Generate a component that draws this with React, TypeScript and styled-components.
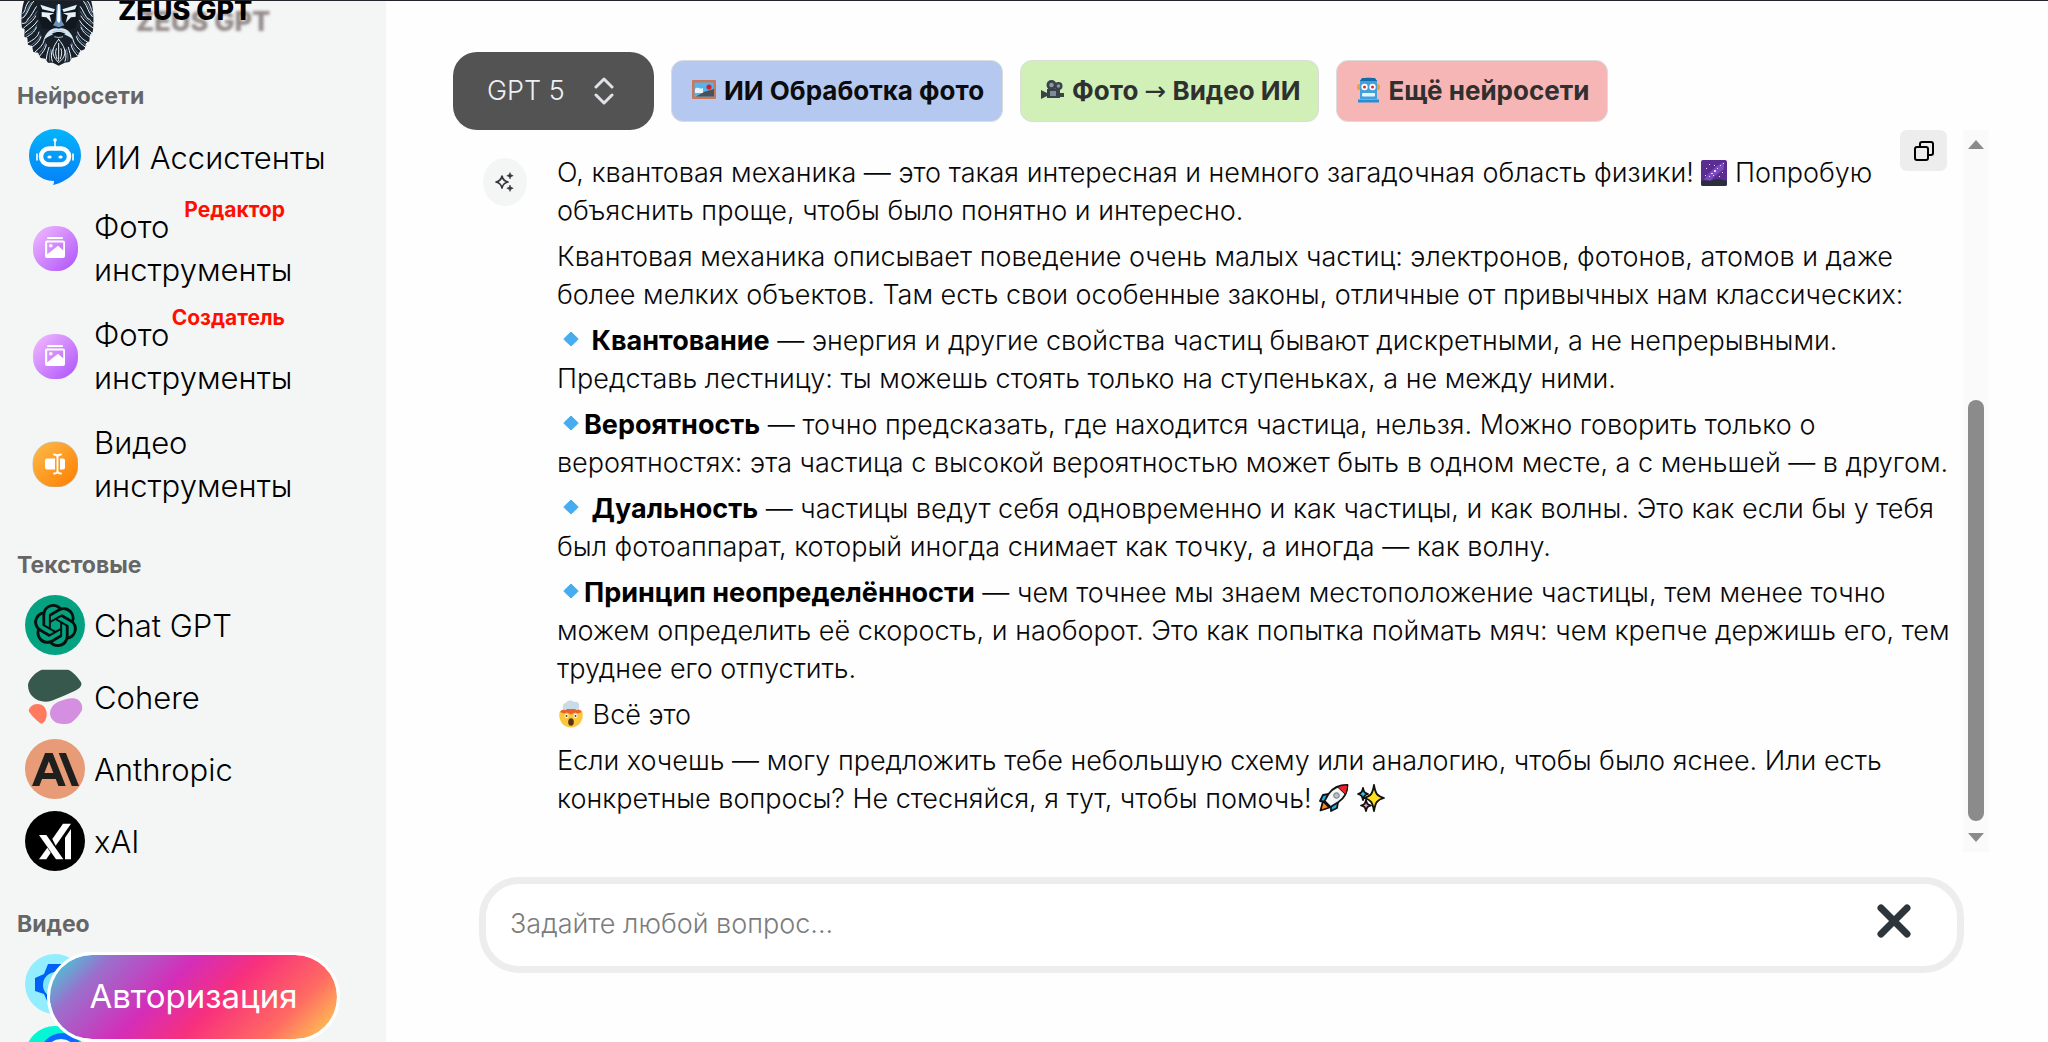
import React from "react";
import styled, { createGlobalStyle, css } from "styled-components";
import { SiOpenai, SiAnthropic } from "react-icons/si";

const GlobalStyle = createGlobalStyle`
  *, *::before, *::after { box-sizing: border-box; }
  body {
    margin: 0;
    background: #fefefe;
    color: #080808;
    font-family: Inter, "Open Sans", "Noto Sans", sans-serif;
    font-weight: 300;
  }
  button, input, select { font: inherit; color: inherit; }
`;

/* ---------- layout ---------- */

const Page = styled.div`
  display: flex;
  height: 100vh;
  overflow: hidden;
  border-top: 1px solid #22262c;
`;

const Sidebar = styled.aside`
  position: relative;
  flex: 0 0 386px;
  overflow: hidden;
  background: #f4f6f6;
`;

const Main = styled.main`
  flex: 1;
  min-width: 0;
  display: flex;
  flex-direction: column;
  padding: 51px 59px 69px 67px;
`;

/* ---------- sidebar ---------- */

const Brand = styled.a`
  display: flex;
  align-items: flex-start;
  gap: 17px;
  padding-left: 17px;
  color: #000;
  text-decoration: none;
`;

const BrandName = styled.span`
  font-size: 27px;
  line-height: 20px;
  font-weight: 800;
  text-shadow: 18px 11px 3px rgba(70, 50, 50, 0.55);
`;

const SectionTitle = styled.h2<{ $first?: boolean }>`
  margin: ${(p) => (p.$first ? 16 : 33)}px 0 10px 17px;
  font-size: 23px;
  line-height: 28px;
  font-weight: 700;
  color: #666;
`;

const NavList = styled.ul`
  margin: 0;
  padding: 0;
  list-style: none;
`;

const NavLink = styled.a<{ $height: number }>`
  position: relative;
  display: flex;
  align-items: center;
  gap: 9px;
  width: 308px;
  min-height: ${(p) => p.$height}px;
  padding-left: 25px;
  color: #000;
  font-size: 31px;
  line-height: 43px;
  text-decoration: none;
  white-space: nowrap;
`;

const IconCell = styled.span`
  flex: 0 0 60px;
  display: flex;
  align-items: center;
  justify-content: center;
`;

const Disc = styled.span<{ $bg: string; $fg: string }>`
  display: flex;
  align-items: center;
  justify-content: center;
  width: 60px;
  height: 60px;
  border-radius: 50%;
  background: ${(p) => p.$bg};
  color: ${(p) => p.$fg};
`;

const Tag = styled.span`
  position: absolute;
  top: 3px;
  right: 23px;
  font-size: 21px;
  line-height: 26px;
  font-weight: 700;
  color: #ff0f00;
`;

const AuthButton = styled.button`
  position: absolute;
  left: 47px;
  bottom: 0;
  width: 293px;
  height: 90px;
  padding: 0 0 2px;
  border: 3px solid #fff;
  border-radius: 45px;
  background: linear-gradient(135deg, #30e0d8 0%, #9b6fcc 17%, #d42db9 40%, #f8307c 58%, #ff6a62 80%, #ffd750 100%) padding-box;
  color: #fff;
  font-size: 33px;
  font-weight: 400;
  cursor: pointer;
`;

/* ---------- toolbar ---------- */

const Toolbar = styled.div`
  display: flex;
  align-items: center;
  gap: 17px;
`;

const ModelPicker = styled.label`
  position: relative;
  display: flex;
  align-items: center;
  color: #eef1f3;
`;

const ModelSelect = styled.select`
  appearance: none;
  width: 201px;
  height: 78px;
  padding: 0 64px 2px 34px;
  border: 0;
  border-radius: 24px;
  background: #535353;
  font-size: 27px;
`;

const PickerArrows = styled.svg`
  position: absolute;
  right: 40px;
  pointer-events: none;
`;

const ActionButton = styled.button<{ $bg: string; $color: string }>`
  display: flex;
  align-items: center;
  gap: 8px;
  height: 62px;
  padding: 0 18px 2px 20px;
  border: 1px solid #dcdcdc;
  border-radius: 12px;
  background: ${(p) => p.$bg};
  color: ${(p) => p.$color};
  font-size: 26px;
  font-weight: 700;
  white-space: nowrap;
  cursor: pointer;
`;

const Arrow = styled.span`
  font-family: "DejaVu Sans", sans-serif;
  font-weight: 400;
`;

/* ---------- conversation ---------- */

const Conversation = styled.section`
  flex: 1;
  min-height: 0;
  display: flex;
`;

const Messages = styled.div`
  position: relative;
  flex: 1;
  min-width: 0;
  overflow: hidden;
`;

const Message = styled.article`
  display: flex;
  align-items: flex-start;
  gap: 30px;
  padding: 24px 0 0 30px;
`;

const Avatar = styled.span`
  flex: 0 0 44px;
  display: flex;
  align-items: center;
  justify-content: center;
  height: 48px;
  margin-top: 4px;
  border-radius: 50%;
  background: #f4f6f6;
`;

const Answer = styled.div`
  flex: 1;
  font-size: 27px;
  line-height: 38px;
  white-space: nowrap;

  p { margin: 0 0 8px; }
  strong { font-weight: 700; color: #000; }
`;

const inlineGlyph = css`
  display: inline-block;
  vertical-align: -4px;
`;

const Glyph = styled.svg`
  ${inlineGlyph}
  flex: none;
`;

const CopyButton = styled.button`
  position: absolute;
  top: 0;
  right: 16px;
  display: flex;
  align-items: center;
  justify-content: center;
  width: 47px;
  height: 41px;
  padding: 0;
  border: 0;
  border-radius: 7px;
  background: #ededed;
  cursor: pointer;
`;

const ScrollTrack = styled.div`
  flex: 0 0 26px;
  display: flex;
  flex-direction: column;
  align-items: center;
  padding: 10px 0;
  background: #fafafa;
`;

const ScrollThumb = styled.div`
  width: 16px;
  height: 60%;
  margin: auto 0 12px;
  border-radius: 8px;
  background: #8b8b8b;
`;

const Composer = styled.form`
  display: flex;
  align-items: center;
  height: 96px;
  margin: 25px 25px 0 26px;
  padding: 0 46px 4px 24px;
  border: 7px solid #ededed;
  border-radius: 40px;
  background: #fff;
`;

const Prompt = styled.input`
  flex: 1;
  min-width: 0;
  padding: 0;
  border: 0;
  outline: 0;
  background: none;
  font-size: 27px;

  &::placeholder { color: #7c7c7c; opacity: 1; }
`;

const ClearButton = styled.button`
  display: flex;
  padding: 0 0 4px;
  border: 0;
  background: none;
  cursor: pointer;
`;

/* ---------- drawings ---------- */

const ZeusLogo = () => (
  <svg width="84" height="65" viewBox="0 3 252 195" fill="none" aria-hidden="true">
    <path d="M22 0C12 30 12 64 15 84l8 4-1 22 9 4 2 20 12 4 4 18 14 2 8 16 14 2 8 12 14 0 18 9 18-9 14-2 8-12 16-4 8-16 14-6 4-18 10-6 2-20 8-8c4-24 4-70-6-98Z" fill="#18202a" />
    <g stroke="#eaf3fa" strokeWidth="3" strokeLinecap="round">
      <path d="M2 50c6 6 12 6 18 2M16 70c8 2 12-4 18-14M250 48c-6 8-12 8-18 4M234 70c-8 2-10-4-18-14" />
      <path d="M36 4c-14 16-8 26-18 36M50 4C34 22 36 34 22 50M58 20C48 34 46 46 32 58M56 48C50 62 38 68 20 84M62 62C52 78 38 86 24 98M58 82C52 98 40 104 28 112M66 96c-4 18-20 24-32 32M72 110c-4 16-18 24-28 32M82 120c-4 16-16 26-28 36M88 134c-2 14-12 24-20 34M96 142c-4 14-8 26-8 36M106 150c-4 12-4 24 0 34" />
      <path d="M212 4c12 16 8 26 18 36M200 4c14 18 12 32 26 46M190 20c10 14 12 26 24 38M192 48c8 14 16 20 36 36M188 62c8 16 22 24 36 36M192 82c6 16 16 22 28 30M182 96c6 18 20 24 32 32M178 110c4 16 18 24 28 32M168 120c4 16 16 26 28 36M162 134c2 14 12 24 20 34M154 142c4 14 8 26 8 36M144 150c4 12 4 24 0 34" />
      <path d="M125 118c-16 20-24 38-10 58l10 12 12-12c14-20 4-38-12-58ZM125 130v52M118 146c-4 12-2 20 2 30M132 146c4 12 2 20-2 30" />
    </g>
    <g stroke="#79a9d6" strokeWidth="2">
      <path d="M44 6C28 24 32 36 18 52M60 34C50 52 42 58 24 72M60 74C52 92 42 96 26 106M70 104c-6 18-18 24-30 34M86 128c-4 16-14 26-24 36M102 146c-4 14-6 26-4 38M206 6c14 18 12 30 24 44M190 34c10 18 18 24 34 38M190 74c8 18 18 22 34 32M180 104c6 18 18 24 30 34M164 128c4 16 14 26 24 36M148 146c4 14 6 26 4 38" />
    </g>
    <path d="M68 14 116 30l2 40-16 20-26-6-10-30ZM182 14l-48 16-2 40 16 20 26-6 10-30Z" fill="#10171e" />
    <path d="m70 14 44 14-4 8-34-8ZM180 14l-44 14 4 8 34-8ZM74 36l38 4-14 6 6 22-16-16-14-2ZM176 36l-38 4 14 6-6 22 16-16 14-2Z" fill="#e6f1fa" />
    <path d="M119 14h12l3 48 8 14-17 6-17-6 8-14Z" fill="#6a94ba" />
    <path d="M123 12h5l2 50-4 8-6-8Z" fill="#fff" />
    <path d="M125 86c-22-6-38 10-46 36 16-16 28-20 46-18 18-2 30 2 46 18-8-26-24-42-46-36Z" fill="#d3e4f2" />
    <path d="M104 102c14-8 28-8 42 0-12 6-30 6-42 0Z" fill="#0d141a" />
    <path d="M108 95c10-4 24-4 34 0M112 110c8 3 18 3 26 0" stroke="#a9c6de" strokeWidth="3" />
  </svg>
);

const AssistantIcon = () => (
  <svg width="54" height="58" viewBox="0 0 54 58" aria-hidden="true">
    <defs>
      <linearGradient id="assistant" x1="0" y1="0" x2="0" y2="1">
        <stop offset="0" stopColor="#03b4fb" />
        <stop offset="1" stopColor="#0680f8" />
      </linearGradient>
    </defs>
    <path d="M27 1a26 26 0 0 1 26 26c0 14-11 26-28 30 1-2 1-3 1-4C11 53 1 41 1 27A26 26 0 0 1 27 1Z" fill="url(#assistant)" />
    <path d="M27 12v7" stroke="#fff" strokeWidth="1.5" />
    <circle cx="27" cy="12" r="1.8" fill="#fff" />
    <path d="M9 26v6M45 26v6" stroke="#fff" strokeWidth="1.6" strokeLinecap="round" />
    <rect x="13" y="20.5" width="28" height="16" rx="8" fill="none" stroke="#fff" strokeWidth="4.5" />
    <ellipse cx="21.500" cy="29" rx="2.200" ry="1.500" fill="#fff" />
    <ellipse cx="32.500" cy="29" rx="2.200" ry="1.500" fill="#fff" />
  </svg>
);

const PhotoIcon = ({ id }: { id: string }) => (
  <svg width="46" height="46" viewBox="0 0 46 46" aria-hidden="true">
    <defs>
      <linearGradient id={id} x1="0" y1="0" x2="1" y2="1">
        <stop offset="0.1" stopColor="#ecb2ff" />
        <stop offset="0.9" stopColor="#b45cfa" />
      </linearGradient>
    </defs>
    <rect x="1" y="1" width="45" height="45" rx="21" fill={`url(#${id})`} />
    <rect x="15" y="12" width="16" height="2" rx="1" fill="#fff" />
    <path d="M15 15.500h16a2 2 0 0 1 2 2V31a2 2 0 0 1-2 2H15a2 2 0 0 1-2-2V17.500a2 2 0 0 1 2-2Zm.2 2v11.700L26 20.800l5.200 4.400v-7.700Z" fill="#fff" fillRule="evenodd" />
    <circle cx="18.800" cy="20.800" r="1.800" fill="#fff" />
  </svg>
);

const VideoIcon = () => (
  <svg width="46" height="46" viewBox="0 0 46 46" aria-hidden="true">
    <defs>
      <linearGradient id="videoTool" x1="0" y1="0" x2="1" y2="1">
        <stop offset="0.100" stopColor="#fdb544" />
        <stop offset="0.900" stopColor="#fd8306" />
      </linearGradient>
    </defs>
    <rect x="1" y="1" width="45" height="45" rx="21" fill="url(#videoTool)" stroke="#b9b59b" strokeWidth="0.700" />
    <path d="M15 17.500h8v11h-8a2 2 0 0 1-2-2v-7a2 2 0 0 1 2-2ZM28 17.500h3a2 2 0 0 1 2 2v7a2 2 0 0 1-2 2h-3Z" fill="#fff" />
    <path d="M22 13.500c2 0 3.500.6 3.500 2.500v14c0 1.900-1.500 2.500-3.500 2.500M29 13.500c-2 0-3.500.6-3.500 2.500v14c0 1.900 1.500 2.500 3.500 2.500" stroke="#fff" strokeWidth="1.800" fill="none" strokeLinecap="round" />
  </svg>
);

const CohereIcon = () => (
  <svg width="60" height="60" viewBox="0 0 180 180" aria-hidden="true">
    <path d="M50 8h78c12 1 38 30 41 40 2 12-10 19-22 25-22 10-45 21-67 28-36 11-71-10-71-46 0-16 22-40 41-47Z" fill="#37594d" />
    <path d="M104 103c16-6 38-14 52-6 12 6 18 20 15 32-6 14-24 34-36 40-8 3-26 3-36 0-14-5-23-16-24-29 0-17 12-31 29-37Z" fill="#d48fe0" />
    <path d="M37 111c18 0 29 14 28 32-1 14-7 24-15 27-8 0-36-30-39-38 2-12 12-21 26-21Z" fill="#ff7a5f" />
  </svg>
);

const XaiMark = () => (
  <svg width="60" height="60" viewBox="0 0 180 180" fill="currentColor" aria-hidden="true">
    <polygon points="42,72 64,72 115,145 93,145" />
    <polygon points="42,145 67,110 77,125 64,145" />
    <polygon points="82,84 114,38 138,38 92,104" />
    <polygon points="120,80 138,54 138,145 120,145" />
  </svg>
);

const HexMark = () => (
  <svg width="60" height="60" viewBox="0 0 60 60" aria-hidden="true">
    <path d="M23 10h14l1 5 12 9v12l-12 12-15 1-4-9-9-3V24l9-4Z" fill="#0062f5" />
    <circle cx="31" cy="31" r="13" fill="#7fe6fa" />
  </svg>
);

const WaveMark = () => (
  <svg width="60" height="60" viewBox="0 0 60 60" aria-hidden="true">
    <path d="M8 22c6-4 14-4 18 2l-10 6Z" fill="#7cf06a" />
    <circle cx="37" cy="29" r="22" fill="#0a6cff" />
    <circle cx="36" cy="29" r="16" fill="#eefcff" />
  </svg>
);

const SparkIcon = () => (
  <svg width="24" height="24" viewBox="0 0 24 24" aria-hidden="true">
    <path d="M9 6c.8 3.600 2.300 5.200 6 6-3.700.8-5.200 2.400-6 6-.8-3.600-2.300-5.200-6-6 3.700-.8 5.200-2.400 6-6Z" fill="none" stroke="#33373b" strokeWidth="1.700" strokeLinejoin="round" />
    <path d="M17 2.500c.5 2 1.200 2.700 3.200 3.200-2 .5-2.700 1.200-3.200 3.200-.5-2-1.200-2.700-3.200-3.200 2-.5 2.700-1.200 3.200-3.200ZM17 15c.5 2 1.200 2.700 3.200 3.200-2 .5-2.700 1.200-3.200 3.200-.5-2-1.200-2.700-3.200-3.200 2-.5 2.700-1.200 3.200-3.200Z" fill="#33373b" stroke="#33373b" strokeWidth="0.600" />
  </svg>
);

const FrameGlyph = () => (
  <Glyph width="24" height="20" viewBox="0 0 24 20" aria-hidden="true">
    <rect x="0" y="0" width="24" height="19" rx="1" fill="#c9775a" />
    <rect x="2.500" y="2.500" width="19" height="14" fill="#55b4f0" />
    <path d="M3 9c3-3 5 1 8-1v5H3Z" fill="#e9f5fd" />
    <path d="m4 16.500 9-5 9-2.500v7.500Z" fill="#46525c" />
    <circle cx="17" cy="7" r="2.600" fill="#d3202f" />
  </Glyph>
);

const CameraGlyph = () => (
  <Glyph width="23" height="20" viewBox="0 0 23 20" aria-hidden="true">
    <g fill="#394249">
      <circle cx="10.500" cy="5" r="5" />
      <circle cx="17.500" cy="6" r="4" />
      <path d="M6 9h13v9H6ZM0 10l6 3v3l-6 3ZM17 13h6v4h-6Z" />
    </g>
    <circle cx="10.500" cy="5" r="2.300" fill="#8c979f" />
    <circle cx="17.500" cy="6" r="1.800" fill="#8c979f" />
    <rect x="9" y="11" width="6" height="5" fill="#7d8d98" />
  </Glyph>
);

const RobotGlyph = () => (
  <Glyph width="23" height="26" viewBox="0 0 23 26" aria-hidden="true">
    <path d="M7 2c2-3 7-3 9 0Z" fill="#f5a30f" />
    <rect x="0" y="7" width="23" height="6" rx="2" fill="#f2a032" />
    <path d="M3 3h17v19H3Z" fill="#42a0df" />
    <path d="M5 1h13l2 3H3Z" fill="#176aa8" />
    <circle cx="7.500" cy="10" r="3.200" fill="#fff" />
    <circle cx="15.500" cy="10" r="3.200" fill="#fff" />
    <circle cx="7.500" cy="10" r="1.500" fill="#e8262d" />
    <circle cx="15.500" cy="10" r="1.500" fill="#e8262d" />
    <rect x="5" y="16" width="13" height="3.500" rx="1" fill="#e8f5fc" />
    <path d="M1 22.500h21v3H1Z" fill="#248fd6" />
  </Glyph>
);

const GalaxyGlyph = () => (
  <Glyph width="26" height="26" viewBox="0 0 26 26" aria-label="🌌">
    <rect width="26" height="26" rx="2" fill="#5b2d91" />
    <path d="M3 20 8 13l8-7 7-4v7l-8 6-6 6Z" fill="#7b4bbd" />
    <path d="M0 21c5-2 8 1 12-1s9-1 14 1v3a2 2 0 0 1-2 2H2a2 2 0 0 1-2-2Z" fill="#2a2f3d" />
    <g fill="#e6d5ff">
      <path d="M10 13h2v1h-2ZM13 10h2v2h-2ZM16 8h1v1h-1ZM8 16h1v1H8ZM19 5h1v1h-1ZM12 15h1v1h-1ZM5 8h1v1H5ZM8 4h1v1H8ZM21 12h1v1h-1ZM18 16h1v1h-1ZM4 15h1v1H4ZM22 3h1v1h-1ZM13 5h1v1h-1Z" />
    </g>
  </Glyph>
);

const DiamondGlyph = () => (
  <Glyph width="27" height="26" viewBox="0 0 27 26" aria-label="🔹">
    <path d="m14 4 6.500 6.200c.7.700.7 1 0 1.700L14 18l-6.500-6.100c-.7-.7-.7-1 0-1.700Z" fill="#47adef" stroke="#47adef" strokeLinejoin="round" />
  </Glyph>
);

const MindGlyph = () => (
  <Glyph width="28" height="28" viewBox="0 0 28 28" aria-label="🤯">
    <path d="M2.500 12h23c1.500 9-4 15.500-11.500 15.500S1 21 2.500 12Z" fill="#fbc63a" />
    <path d="M3 12c1-2 3-3 6-2l2-4h6l2 4c3-1 5 0 6 2l-4 1.500-3-1-4 2-4-2-3 1Z" fill="#e8622c" />
    <path d="M6 7a3 3 0 0 1 3-4c1-3 6-3 8-1 3-1 6 1 5 4 1 2-1 4-3 3h-9c-3 1-5 0-4-2Z" fill="#c9dbe6" />
    <circle cx="9.500" cy="16" r="2" fill="#fff" />
    <circle cx="18.500" cy="16" r="2" fill="#fff" />
    <circle cx="9.500" cy="16" r="1" fill="#5a3b1c" />
    <circle cx="18.500" cy="16" r="1" fill="#5a3b1c" />
    <ellipse cx="14" cy="22" rx="2.800" ry="3.800" fill="#5b3217" />
  </Glyph>
);

const RocketGlyph = () => (
  <Glyph width="30" height="28" viewBox="0 0 30 28" aria-label="🚀">
    <path d="M4 17 1.500 26.500l9-3Z" fill="#ff8a1e" stroke="#111" strokeWidth="1.800" strokeLinejoin="round" />
    <path d="m10 10-6 1-3 6 6 1ZM19 18l-1 6-6 3 0-6Z" fill="#20b5ee" stroke="#111" strokeWidth="1.800" strokeLinejoin="round" />
    <path d="M28.500 1c-8 0-15 3-19 9l-4 7 6 6 8-5c6-4 9-10 9-17Z" fill="#f3f5f7" stroke="#111" strokeWidth="1.800" strokeLinejoin="round" />
    <path d="M28.500 1c-4 0-7 .6-10 2l8 7.500c1.500-3 2-6 2-9.500Z" fill="#ec2027" stroke="#111" />
    <circle cx="17.500" cy="11.500" r="2.800" fill="#b8c0c6" stroke="#777" />
  </Glyph>
);

const SparklesGlyph = () => (
  <Glyph width="28" height="28" viewBox="0 0 28 28" aria-label="✨">
    <g stroke="#111" strokeWidth="1.800" strokeLinejoin="round">
      <path d="M17 1c1.500 9 3 11 10 13-7 2-8.500 4-10 13-1.500-9-3-11-10-13 7-2 8.500-4 10-13Z" fill="#fde021" />
      <path d="M6 4c.8 4 1.500 5 5 6-3.500 1-4.200 2-5 6-.8-4-1.500-5-5-6 3.500-1 4.200-2 5-6Z" fill="#36c0f0" />
      <path d="M9 16c.8 4 1.500 4.600 5 5.500-3.500.9-4.200 1.500-5 5.500-.8-4-1.500-4.600-5-5.500 3.500-.9 4.200-1.500 5-5.500Z" fill="#f28fc0" />
    </g>
  </Glyph>
);

/* ---------- page ---------- */

interface NavItem {
  label: React.ReactNode;
  icon: React.ReactNode;
  height?: number;
  tag?: string;
}

const Nav = ({ items }: { items: NavItem[] }) => (
  <NavList>
    {items.map((item, i) => (
      <li key={i}>
        <NavLink href="#" $height={item.height ?? 72}>
          <IconCell>{item.icon}</IconCell>
          <span>{item.label}</span>
          {item.tag && <Tag>{item.tag}</Tag>}
        </NavLink>
      </li>
    ))}
  </NavList>
);

const tools: NavItem[] = [
  { label: "ИИ Ассистенты", icon: <AssistantIcon />, height: 74 },
  { label: <>Фото<br />инструменты</>, icon: <PhotoIcon id="photoEdit" />, height: 108, tag: "Редактор" },
  { label: <>Фото<br />инструменты</>, icon: <PhotoIcon id="photoMake" />, height: 108, tag: "Создатель" },
  { label: <>Видео<br />инструменты</>, icon: <VideoIcon />, height: 108 },
];

const textModels: NavItem[] = [
  { label: "Chat GPT", icon: <Disc $bg="#04a281" $fg="#06110e"><SiOpenai size={43} /></Disc> },
  { label: "Cohere", icon: <CohereIcon /> },
  { label: "Anthropic", icon: <Disc $bg="#e79b77" $fg="#1f1f1e"><SiAnthropic size={47} /></Disc> },
  { label: "xAI", icon: <Disc $bg="#000" $fg="#fff"><XaiMark /></Disc> },
];

const videoModels: NavItem[] = [
  { label: "", icon: <Disc $bg="#92edff" $fg="#0062f5"><HexMark /></Disc> },
  { label: "", icon: <Disc $bg="#04f6d5" $fg="#0062f5"><WaveMark /></Disc> },
];

export default function App() {
  return (
    <>
      <GlobalStyle />
      <Page>
        <Sidebar>
          <Brand href="#">
            <ZeusLogo />
            <BrandName>ZEUS GPT</BrandName>
          </Brand>
          <SectionTitle $first>Нейросети</SectionTitle>
          <Nav items={tools} />
          <SectionTitle>Текстовые</SectionTitle>
          <Nav items={textModels} />
          <SectionTitle>Видео</SectionTitle>
          <Nav items={videoModels} />
          <AuthButton type="button">Авторизация</AuthButton>
        </Sidebar>

        <Main>
          <Toolbar>
            <ModelPicker>
              <ModelSelect aria-label="Модель" defaultValue="gpt5">
                <option value="gpt5">GPT 5</option>
              </ModelSelect>
              <PickerArrows width="20" height="28" viewBox="0 0 20 28" fill="none" stroke="#dfe3e8" strokeWidth="3" strokeLinecap="round" strokeLinejoin="round">
                <path d="m2 10 8-8 8 8M2 18l8 8 8-8" />
              </PickerArrows>
            </ModelPicker>
            <ActionButton type="button" $bg="#b5c9f0" $color="#0c0c0c">
              <FrameGlyph />ИИ Обработка фото
            </ActionButton>
            <ActionButton type="button" $bg="#d0f0b8" $color="#303030">
              <CameraGlyph /><span>Фото <Arrow>→</Arrow> Видео ИИ</span>
            </ActionButton>
            <ActionButton type="button" $bg="#f6b6b6" $color="#303030">
              <RobotGlyph />Ещё нейросети
            </ActionButton>
          </Toolbar>

          <Conversation>
            <Messages>
              <Message>
                <Avatar><SparkIcon /></Avatar>
                <Answer>
                  <p>
                    О, квантовая механика — это такая интересная и немного загадочная область физики! <GalaxyGlyph /> Попробую<br />
                    объяснить проще, чтобы было понятно и интересно.
                  </p>
                  <p>
                    Квантовая механика описывает поведение очень малых частиц: электронов, фотонов, атомов и даже<br />
                    более мелких объектов. Там есть свои особенные законы, отличные от привычных нам классических:
                  </p>
                  <p>
                    <DiamondGlyph /> <strong>Квантование</strong> — энергия и другие свойства частиц бывают дискретными, а не непрерывными.<br />
                    Представь лестницу: ты можешь стоять только на ступеньках, а не между ними.
                  </p>
                  <p>
                    <DiamondGlyph /><strong>Вероятность</strong> — точно предсказать, где находится частица, нельзя. Можно говорить только о<br />
                    вероятностях: эта частица с высокой вероятностью может быть в одном месте, а с меньшей — в другом.
                  </p>
                  <p>
                    <DiamondGlyph /> <strong>Дуальность</strong> — частицы ведут себя одновременно и как частицы, и как волны. Это как если бы у тебя<br />
                    был фотоаппарат, который иногда снимает как точку, а иногда — как волну.
                  </p>
                  <p>
                    <DiamondGlyph /><strong>Принцип неопределённости</strong> — чем точнее мы знаем местоположение частицы, тем менее точно<br />
                    можем определить её скорость, и наоборот. Это как попытка поймать мяч: чем крепче держишь его, тем<br />
                    труднее его отпустить.
                  </p>
                  <p><MindGlyph /> Всё это</p>
                  <p>
                    Если хочешь — могу предложить тебе небольшую схему или аналогию, чтобы было яснее. Или есть<br />
                    конкретные вопросы? Не стесняйся, я тут, чтобы помочь! <RocketGlyph /> <SparklesGlyph />
                  </p>
                </Answer>
              </Message>
              <CopyButton type="button" aria-label="Копировать">
                <svg width="22" height="22" viewBox="0 0 22 22" fill="none" stroke="#000" strokeWidth="2">
                  <rect x="2" y="7" width="13" height="13" rx="2" />
                  <path d="M7 7V4a2 2 0 0 1 2-2h9a2 2 0 0 1 2 2v9a2 2 0 0 1-2 2h-3" />
                </svg>
              </CopyButton>
            </Messages>
            <ScrollTrack>
              <svg width="16" height="9" viewBox="0 0 16 9" fill="#8b8b8b"><path d="M8 0 16 9H0Z" /></svg>
              <ScrollThumb />
              <svg width="16" height="9" viewBox="0 0 16 9" fill="#8b8b8b"><path d="M8 9 0 0h16Z" /></svg>
            </ScrollTrack>
          </Conversation>

          <Composer>
            <Prompt type="text" aria-label="Вопрос" placeholder="Задайте любой вопрос..." />
            <ClearButton type="reset" aria-label="Очистить">
              <svg width="34" height="34" viewBox="0 0 34 34" stroke="#2d363c" strokeWidth="7" strokeLinecap="round">
                <path d="m4 4 26 26M30 4 4 30" />
              </svg>
            </ClearButton>
          </Composer>
        </Main>
      </Page>
    </>
  );
}
